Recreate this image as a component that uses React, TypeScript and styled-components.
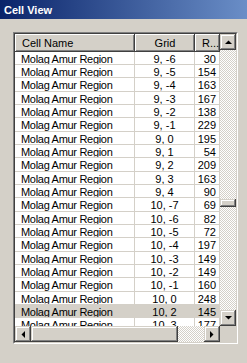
import styled, { createGlobalStyle } from 'styled-components'

const GlobalStyle = createGlobalStyle`
  html, body {
    margin: 0;
    padding: 0;
    background: #d4d0c8;
  }
  body {
    font-family: 'Liberation Sans', Arial, sans-serif;
    font-size: 11px;
    color: #000;
  }
`

interface ICell {
  grid: string
  rank: number
}

const cells: ICell[] = [
  { grid: '9, -6', rank: 30 },
  { grid: '9, -5', rank: 154 },
  { grid: '9, -4', rank: 163 },
  { grid: '9, -3', rank: 167 },
  { grid: '9, -2', rank: 138 },
  { grid: '9, -1', rank: 229 },
  { grid: '9, 0', rank: 195 },
  { grid: '9, 1', rank: 54 },
  { grid: '9, 2', rank: 209 },
  { grid: '9, 3', rank: 163 },
  { grid: '9, 4', rank: 90 },
  { grid: '10, -7', rank: 69 },
  { grid: '10, -6', rank: 82 },
  { grid: '10, -5', rank: 72 },
  { grid: '10, -4', rank: 197 },
  { grid: '10, -3', rank: 149 },
  { grid: '10, -2', rank: 149 },
  { grid: '10, -1', rank: 160 },
  { grid: '10, 0', rank: 248 },
  { grid: '10, 2', rank: 145 },
  { grid: '10, 3', rank: 177 },
]

const selectedGrid = '10, 2'

const Arrow = ({ dir }: { dir: 'up' | 'down' | 'left' | 'right' }) => {
  const points = {
    up: '0,4 7,4 3.5,0.5',
    down: '0,0 7,0 3.5,3.5',
    left: '4,0 4,7 0.5,3.5',
    right: '0,0 0,7 3.5,3.5',
  }[dir]
  const vertical = dir === 'up' || dir === 'down'
  return (
    <svg width={vertical ? 7 : 4} height={vertical ? 4 : 7}>
      <polygon points={points} fill='#000' />
    </svg>
  )
}

const App = () => {
  return (
    <>
      <GlobalStyle />
      <Window>
        <TitleBar>Cell View</TitleBar>
        <Frame>
          <FrameInner>
            <ListPane>
              <Header>
                <HeaderCell>Cell Name</HeaderCell>
                <HeaderCell $align='center'>Grid</HeaderCell>
                <HeaderCell>R...</HeaderCell>
              </Header>
              {cells.map((cell) => (
                <Row key={cell.grid} $selected={cell.grid === selectedGrid}>
                  <Cell>Molag Amur Region</Cell>
                  <Cell $align='center'>{cell.grid}</Cell>
                  <Cell $align='right'>{cell.rank}</Cell>
                </Row>
              ))}
            </ListPane>
            <VScroll>
              <ScrollButton>
                <Arrow dir='up' />
              </ScrollButton>
              <Track $vertical>
                <Thumb style={{ marginTop: 149, height: 8 }} />
              </Track>
              <ScrollButton>
                <Arrow dir='down' />
              </ScrollButton>
            </VScroll>
            <HScroll>
              <ScrollButton>
                <Arrow dir='left' />
              </ScrollButton>
              <Thumb style={{ width: 147 }} />
              <Track />
              <ScrollButton>
                <Arrow dir='right' />
              </ScrollButton>
            </HScroll>
            <Corner />
          </FrameInner>
        </Frame>
      </Window>
    </>
  )
}

const raised = `
  background: #d4d0c8;
  box-shadow: inset -1px -1px #404040, inset 1px 1px #d4d0c8,
    inset -2px -2px #808080, inset 2px 2px #fff;
`

const Window = styled.div`
  width: 247px;
  height: 363px;
  background: #d4d0c8;
  display: flex;
  flex-direction: column;
  overflow: hidden;
`

const TitleBar = styled.div`
  height: 19px;
  display: flex;
  align-items: center;
  padding-left: 4px;
  background: linear-gradient(to right, #0a246a, #6a8ec7);
  color: #fff;
  font-weight: bold;
  font-size: 11px;
`

const Frame = styled.div`
  margin: 13px 0 0 13px;
  width: 225px;
  height: 312px;
  box-sizing: border-box;
  border: 1px solid;
  border-color: #808080 #fff #fff #808080;
`

const FrameInner = styled.div`
  height: 100%;
  box-sizing: border-box;
  border: 1px solid;
  border-color: #404040 #d4d0c8 #d4d0c8 #404040;
  display: grid;
  grid-template-columns: 205px 16px;
  grid-template-rows: 292px 16px;
`

const ListPane = styled.div`
  background: #fff;
  overflow: hidden;
  display: flex;
  flex-direction: column;
`

const Header = styled.div`
  display: grid;
  grid-template-columns: 120px 60px 25px;
  height: 18px;
  flex-shrink: 0;
`

const HeaderCell = styled.div<{ $align?: string }>`
  background: #d4d0c8;
  box-shadow: inset -1px -1px #404040, inset 1px 1px #fff,
    inset -2px -2px #808080;
  display: flex;
  align-items: center;
  justify-content: ${(p) => (p.$align === 'center' ? 'center' : 'flex-start')};
  padding-bottom: 1px;
  padding-left: ${(p) => (p.$align === 'center' ? '0' : '7px')};
  white-space: nowrap;
  overflow: hidden;
`

/* rows alternate 13/13/14px so the list keeps the original's pitch */
const Row = styled.div<{ $selected?: boolean }>`
  display: grid;
  grid-template-columns: 120px 60px 25px;
  height: 13px;
  flex-shrink: 0;
  background: ${(p) => (p.$selected ? '#d4d0c8' : '#fff')};
  &:nth-child(3n + 4) {
    height: 14px;
  }
`

const Cell = styled.div<{ $align?: string }>`
  box-sizing: border-box;
  height: 100%;
  border-right: 1px solid #d4d0c8;
  border-bottom: 1px solid #d4d0c8;
  padding-top: 1px;
  line-height: 12px;
  white-space: nowrap;
  overflow: hidden;
  letter-spacing: ${(p) => (p.$align ? '0' : '-0.3px')};
  text-align: ${(p) => p.$align || 'left'};
  padding-left: ${(p) => (p.$align ? '0' : '6px')};
  padding-right: ${(p) => (p.$align === 'right' ? '3px' : '0')};
`

const VScroll = styled.div`
  display: flex;
  flex-direction: column;
`

const HScroll = styled.div`
  display: flex;
`

const ScrollButton = styled.div`
  ${raised}
  width: 16px;
  height: 16px;
  flex-shrink: 0;
  display: flex;
  align-items: center;
  justify-content: center;
`

const Track = styled.div<{ $vertical?: boolean }>`
  flex: 1;
  display: flex;
  flex-direction: ${(p) => (p.$vertical ? 'column' : 'row')};
  background: repeating-conic-gradient(#fff 0 25%, #d4d0c8 0 50%) 0 0 / 2px 2px;
`

const Thumb = styled.div`
  ${raised}
  flex-shrink: 0;
  height: 16px;
  width: 16px;
`

const Corner = styled.div`
  background: #d4d0c8;
`

export default App
